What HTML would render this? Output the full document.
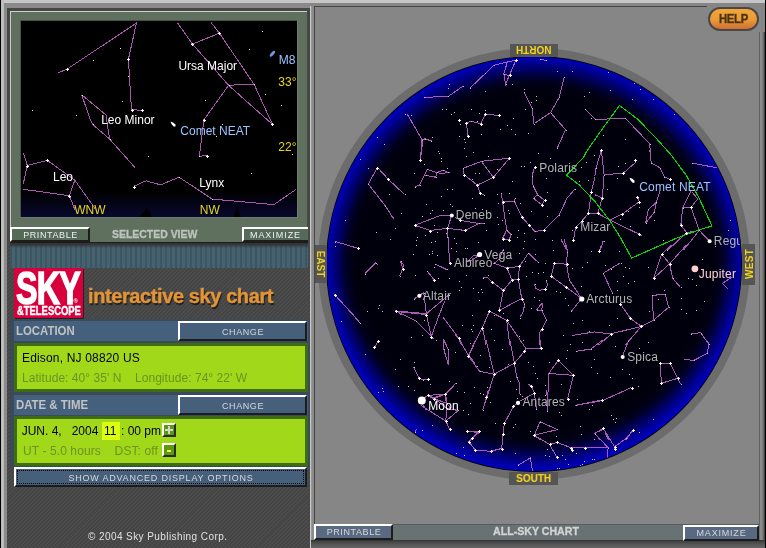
<!DOCTYPE html>
<html><head><meta charset="utf-8">
<style>
*{margin:0;padding:0;box-sizing:border-box}
html,body{width:766px;height:548px;overflow:hidden;background:#858585;font-family:"Liberation Sans",sans-serif}
.abs{position:absolute}
#root{position:absolute;left:0;top:0;width:766px;height:548px;overflow:hidden;background:#868686}
.t{position:absolute;white-space:nowrap;line-height:1;opacity:0.999}
.btn,.bar span,.dir span{opacity:0.999}
.btn{position:absolute;border-top:2px solid #fff;border-left:2px solid #fff;border-right:2px solid #1c1c1c;border-bottom:2px solid #1c1c1c;color:#d4d8dc;font-size:9px;text-align:center;letter-spacing:0.6px;white-space:nowrap;padding-left:1px}
.bar{position:absolute;left:14px;width:294px;height:20px;background:#44607c}
.bar span{position:absolute;left:2px;top:3px;font-size:12px;font-weight:bold;color:#c2c2c2;line-height:14px;transform:scaleX(0.95);transform-origin:left top}
.gbox{position:absolute;left:14px;width:294px;background:#a2d81a;border:3px solid #3e6c10}
.dir{position:absolute;background:#555;color:#f2d21e;font-weight:bold;font-size:10px;text-align:center}
</style></head><body>
<div id="root">
<!-- outer frame -->
<div class="abs" style="left:0;top:0;width:766px;height:3px;background:#c6c6c6"></div>
<div class="abs" style="left:0;top:0;width:1px;height:548px;background:#000"></div>
<div class="abs" style="left:1px;top:0;width:3px;height:548px;background:#bdbdbd"></div>

<!-- LEFT PANEL -->
<div class="abs" style="left:4px;top:3px;width:306px;height:545px;background:#8a8a8a"></div>
<div class="abs" style="left:7px;top:8px;width:303px;height:540px;background:repeating-linear-gradient(135deg,#4c4c4c 0,#4c4c4c 1.4px,#444 1.4px,#444 2.8px)"></div>
<div class="abs" style="left:310px;top:6px;width:1px;height:542px;background:#c8c8c8"></div>
<div class="abs" style="left:311px;top:6px;width:3px;height:542px;background:linear-gradient(90deg,#a0a0a0,#8a8a8a 40%)"></div>
<div class="abs" style="left:314px;top:6px;width:1px;height:542px;background:#444"></div>

<!-- selected view frame -->
<div class="abs" style="left:7px;top:8px;width:303px;height:236px;background:#474747"></div>
<div class="abs" style="left:10px;top:11px;width:297px;height:231px;background:#5f705f;border-top:1px solid #cfcfcf;border-left:1px solid #cfcfcf"></div>
<div class="abs" style="left:20px;top:20px;width:278px;height:198px;background:#6c7c6c"></div>
<div class="abs" style="left:20px;top:20px;width:277px;height:197px;background:#465448"></div>
<div class="abs" id="sv" style="left:21px;top:21px;width:276px;height:196px;background:#000;overflow:hidden">
<!--SVSVG-->
<svg width="276" height="196" viewBox="21 21 276 196" style="position:absolute;left:0;top:0">
<defs><linearGradient id="hz" x1="0" y1="0" x2="0" y2="1"><stop offset="0" stop-color="#000"/><stop offset="1" stop-color="#08082e"/></linearGradient></defs>
<rect x="21" y="191" width="276" height="26" fill="url(#hz)"/>
<g fill="none" stroke="#a856ae" stroke-width="1" shape-rendering="crispEdges">
<polyline points="58.4,72.6 66.6,69.4 137.0,22.7"/>
<polyline points="136.5,22.7 128.4,59.3 131.5,109.6 141.6,110.3"/>
<polyline points="81.6,94.6 106.0,115.0 108.0,129.0 109.6,139.0 134.8,167.4"/>
<polyline points="81.6,94.6 90.4,120.0 92.6,124.4 109.6,139.0"/>
<polyline points="177.4,22.7 192.5,44.1 228.6,85.3 249.6,104.1 272.4,124.4"/>
<polyline points="211.2,22.7 219.4,33.2 254.1,84.4 272.4,124.4"/>
<polyline points="192.5,44.1 219.4,33.2"/>
<polyline points="228.6,85.3 241.0,84.6 254.1,84.4"/>
<polyline points="228.6,85.3 203.9,119.8 199.3,156.4 206.6,155.5"/>
<polyline points="23.3,152.7 27.3,165.5 23.3,183.8"/>
<polyline points="27.3,165.5 47.4,160.4 74.8,180.2 69.4,195.7 23.3,189.3"/>
<polyline points="74.8,180.2 95.0,208.5"/>
<polyline points="69.4,195.7 74.8,209.4"/>
<polyline points="133.8,186.3 146.1,180.8 160.7,184.9 179.0,177.2 212.3,199.1 274.0,204.6 295.9,189.5"/>
</g>
<g fill="#fff" shape-rendering="crispEdges">
<rect x="66" y="69" width="3" height="1"/><rect x="67" y="68" width="1" height="3"/>
<rect x="127" y="59" width="3" height="1"/><rect x="128" y="58" width="1" height="3"/>
<rect x="131" y="110" width="3" height="1"/><rect x="132" y="109" width="1" height="3"/>
<rect x="141" y="110" width="3" height="1"/><rect x="142" y="109" width="1" height="3"/>
<rect x="191" y="44" width="3" height="1"/><rect x="192" y="43" width="1" height="3"/>
<rect x="218" y="33" width="3" height="1"/><rect x="219" y="32" width="1" height="3"/>
<rect x="26" y="166" width="3" height="1"/><rect x="27" y="165" width="1" height="3"/>
<rect x="46" y="160" width="3" height="1"/><rect x="47" y="159" width="1" height="3"/>
<rect x="68" y="196" width="3" height="1"/><rect x="69" y="195" width="1" height="3"/>
<rect x="133" y="187" width="3" height="1"/><rect x="134" y="186" width="1" height="3"/>
<rect x="206" y="156" width="3" height="1"/><rect x="207" y="155" width="1" height="3"/>
<rect x="271" y="124" width="3" height="1"/><rect x="272" y="123" width="1" height="3"/>
<rect x="203" y="120" width="3" height="1"/><rect x="204" y="119" width="1" height="3"/>
<rect x="120" y="48" width="1" height="1" fill="#e8e8e8"/>
<rect x="93" y="60" width="1" height="1" fill="#e8e8e8"/>
<rect x="128" y="76" width="1" height="1" fill="#e8e8e8"/>
<rect x="122" y="101" width="1" height="1" fill="#e8e8e8"/>
<rect x="32" y="110" width="1" height="1" fill="#e8e8e8"/>
<rect x="76" y="115" width="1" height="1" fill="#e8e8e8"/>
<rect x="82" y="95" width="1" height="1" fill="#e8e8e8"/>
<rect x="229" y="85" width="1" height="1" fill="#e8e8e8"/>
<rect x="254" y="84" width="1" height="1" fill="#e8e8e8"/>
<rect x="262" y="31" width="1" height="1" fill="#e8e8e8"/>
<rect x="249" y="49" width="1" height="1" fill="#e8e8e8"/>
<rect x="205" y="100" width="1" height="1" fill="#e8e8e8"/>
<rect x="265" y="94" width="1" height="1" fill="#e8e8e8"/>
<rect x="281" y="105" width="1" height="1" fill="#e8e8e8"/>
<rect x="110" y="139" width="1" height="1" fill="#e8e8e8"/>
<rect x="148" y="156" width="1" height="1" fill="#e8e8e8"/>
<rect x="93" y="124" width="1" height="1" fill="#e8e8e8"/>
<rect x="199" y="156" width="1" height="1" fill="#e8e8e8"/>
<rect x="179" y="177" width="1" height="1" fill="#e8e8e8"/>
<rect x="212" y="199" width="1" height="1" fill="#e8e8e8"/>
<rect x="251" y="173" width="1" height="1" fill="#e8e8e8"/>
<rect x="292" y="154" width="1" height="1" fill="#e8e8e8"/>
<rect x="216" y="136" width="1" height="1" fill="#e8e8e8"/>
<rect x="222" y="124" width="1" height="1" fill="#e8e8e8"/>
</g>
<path d="M140,217 L142,213 L144,212 L145,209 L147,208 L148,210 L150,212 L152,217Z" fill="#000"/>
<path d="M233,217 L236,210 L237,206 L238,210 L241,217Z" fill="#000"/>
<ellipse cx="272.4" cy="53.8" rx="3.6" ry="1.5" fill="#6a98e0" transform="rotate(-50 272.4 53.8)"/>
<path d="M170.5,121.5 L173,122.5 L175.5,124.5 L175.5,126.5 L173.5,126.5 L171.5,124Z" fill="#fff"/>
<g font-family="Liberation Sans, sans-serif" font-size="12" style="opacity:0.999">
<text x="178.4" y="69.8" fill="#fff">Ursa Major</text>
<text x="101.2" y="124.4" fill="#fff">Leo Minor</text>
<text x="180.3" y="134.8" fill="#9cc4ff">Comet NEAT</text>
<text x="199.3" y="186.6" fill="#fff">Lynx</text>
<text x="53.0" y="180.5" fill="#fff">Leo</text>
<text x="74.3" y="214" fill="#e6d61e">WNW</text>
<text x="199.8" y="214" fill="#e6d61e">NW</text>
<text x="278.3" y="86.2" fill="#e6d61e">33°</text>
<text x="278.3" y="150.9" fill="#e6d61e">22°</text>
<text x="278.7" y="63.5" fill="#9cc4ff">M8</text>
</g></svg>
<!--/SVSVG-->
</div>
<div class="btn" style="left:10px;top:227px;width:80px;height:15px;background:#566a58;line-height:12px;color:#f0f0f0">PRINTABLE</div>
<div class="btn" style="left:242px;top:227px;width:66px;height:15px;background:#566a58;line-height:12px;border-right:0;letter-spacing:0.95px;padding-left:0;text-indent:-1px;color:#f0f0f0">MAXIMIZE</div>
<div class="t" style="left:112px;top:229px;font-size:11px;font-weight:bold;color:#bcc4bc;-webkit-text-stroke:0.3px #bcc4bc;transform:scaleX(0.95);transform-origin:left top">SELECTED VIEW</div>

<!-- blue band -->
<div class="abs" style="left:10px;top:242px;width:298px;height:26px;background:linear-gradient(#111 0,#333 1.5px,rgba(50,50,50,0.8) 3px,rgba(60,70,75,0) 6px),repeating-linear-gradient(90deg,#3b5563 0,#3b5563 2.5px,#47626f 2.5px,#47626f 5px)"></div>

<!-- logo -->
<div class="abs" style="left:14px;top:268px;width:69px;height:50px;background:#d8003c;box-shadow:1px 1px 0 #222"></div>
<div class="t" style="left:15.5px;top:265px;font-size:46px;font-weight:bold;color:#fff;-webkit-text-stroke:1.6px #fff;letter-spacing:-1px;transform:scaleX(0.70);transform-origin:left top">SKY</div>
<div class="t" style="left:16.5px;top:305px;font-size:12px;font-weight:bold;color:#fff;-webkit-text-stroke:0.4px #fff;transform:scaleX(0.785);transform-origin:left top">&amp;TELESCOPE</div>
<div class="t" style="left:73.5px;top:298px;font-size:6px;color:#fff;font-weight:bold">®</div>
<div class="t" style="left:88px;top:285.5px;font-size:20px;font-weight:bold;color:#e29436;-webkit-text-stroke:0.4px #e29436;text-shadow:1px 2px 1px #1c1c1c;letter-spacing:-0.4px">interactive sky chart</div>

<!-- location -->
<div class="abs" style="left:10px;top:319px;width:300px;height:148px;background:#3b4a5b"></div>
<div class="bar" style="top:321px"><span>LOCATION</span></div>
<div class="btn" style="left:178px;top:321px;width:129px;height:20px;background:#46607c;line-height:18px">CHANGE</div>
<div class="gbox" style="top:343px;height:49px"></div>
<div class="t" style="left:22px;top:352px;font-size:12px;color:#000;letter-spacing:0.17px">Edison, NJ 08820 US</div>
<div class="t" style="left:22px;top:371.6px;font-size:12px;color:#6a9422;letter-spacing:0.05px">Latitude: 40° 35' N &nbsp;&nbsp; Longitude: 74° 22' W</div>

<!-- date & time -->
<div class="bar" style="top:394.5px"><span>DATE &amp; TIME</span></div>
<div class="btn" style="left:178px;top:395px;width:129px;height:20px;background:#46607c;line-height:18px">CHANGE</div>
<div class="gbox" style="top:416px;height:50px"></div>
<div class="abs" style="left:102px;top:422px;width:18px;height:18px;background:#dcff10"></div>
<div class="t" style="left:21.7px;top:425px;font-size:12px;color:#000">JUN. 4, &nbsp; 2004</div>
<div class="t" style="left:104px;top:425px;font-size:12px;color:#000">11</div>
<div class="t" style="left:121px;top:425px;font-size:12px;color:#000">: 00 pm</div>
<div class="t" style="left:23px;top:445px;font-size:12px;color:#6a9422;letter-spacing:0.1px">UT - 5.0 hours &nbsp;&nbsp; DST: off</div>
<div class="abs" style="left:162px;top:423px;width:14px;height:14px;background:#5c9a0a;border-top:2px solid #fff;border-left:2px solid #fff;border-right:2px solid #2a2a2a;border-bottom:2px solid #2a2a2a"></div>
<div class="abs" style="left:165px;top:429px;width:8px;height:2px;background:#d4d4d4"></div>
<div class="abs" style="left:168px;top:426px;width:2px;height:8px;background:#d4d4d4"></div>
<div class="abs" style="left:162px;top:443px;width:14px;height:14px;background:#5c9a0a;border-top:2px solid #fff;border-left:2px solid #fff;border-right:2px solid #2a2a2a;border-bottom:2px solid #2a2a2a"></div>
<div class="abs" style="left:167px;top:450px;width:4px;height:2px;background:#e6f060"></div>
<div class="btn" style="left:14px;top:467px;width:293px;height:20px;background:#46607c;line-height:18px;letter-spacing:0.8px;outline:1px dotted #000;outline-offset:-4px">SHOW ADVANCED DISPLAY OPTIONS</div>
<div class="t" style="left:88px;top:532px;font-size:10px;color:#e0e0e0;letter-spacing:0.42px">© 2004 Sky Publishing Corp.</div>

<!-- RIGHT PANEL -->
<div class="abs" style="left:315px;top:6px;width:392px;height:1px;background:#444"></div>
<div class="abs" id="rp" style="left:315px;top:7px;width:451px;height:541px;background:#868686"></div>
<!-- ring + sky -->
<div class="abs" style="left:315px;top:7px;width:445px;height:517px;overflow:hidden">
  <div class="abs" style="left:3px;top:41px;width:432px;height:432px;border-radius:50%;background:#6c6c6c"></div>
</div>
<div class="abs" style="left:326px;top:56px;width:416px;height:416px;border-radius:50%;background:#000"></div>
<div class="abs" id="sky" style="left:327px;top:57px;width:414px;height:414px;border-radius:50%;overflow:hidden;background:#0000b2">
<!--SKYSVG-->
<svg width="414" height="414" viewBox="327 57 414 414" style="position:absolute;left:0;top:0">
<defs><filter id="hb" x="-20%" y="-20%" width="140%" height="140%"><feGaussianBlur stdDeviation="8.6 10"/></filter></defs>
<rect x="320" y="50" width="430" height="430" fill="#0000ca"/>
<polygon points="732.5,264.5 731.5,281.7 728.9,298.8 724.6,315.4 718.8,331.6 711.6,347.1 703.2,361.9 693.5,375.8 682.7,388.9 671.0,401.0 658.4,412.2 645.0,422.3 630.8,431.3 615.9,439.1 600.4,445.6 584.4,450.8 568.0,454.6 551.3,456.9 534.5,457.7 517.7,456.9 501.0,454.6 484.6,450.8 468.6,445.6 453.1,439.1 438.2,431.3 424.0,422.3 410.6,412.2 398.0,401.0 386.3,388.9 375.5,375.8 365.8,361.9 357.4,347.1 350.2,331.6 344.4,315.4 340.1,298.8 337.5,281.7 336.5,264.5 337.2,247.2 339.6,230.1 343.6,213.3 349.1,197.0 356.1,181.3 364.5,166.3 374.0,152.1 384.7,138.8 396.4,126.4 409.0,115.0 422.5,104.6 436.8,95.3 451.9,87.3 467.5,80.5 483.8,75.2 500.4,71.3 517.4,68.9 534.5,68.1 551.6,68.9 568.6,71.3 585.2,75.2 601.5,80.5 617.1,87.3 632.2,95.3 646.5,104.6 660.0,115.0 672.6,126.4 684.3,138.8 695.0,152.1 704.5,166.3 712.9,181.3 719.9,197.0 725.4,213.3 729.4,230.1 731.8,247.2" fill="#03030f" filter="url(#hb)"/>
<g fill="none" stroke="#ac58b4" stroke-width="1" shape-rendering="crispEdges">
<polyline points="424.3,97.4 448.4,96.3 462.6,86.4"/>
<polyline points="469.6,88.5 485.5,73.3 493.7,65.4 507.4,61.8 515.7,60.5"/>
<polyline points="507.4,61.8 503.8,74.2 505.6,84.3 515.7,60.5"/>
<polyline points="503.8,74.2 509.6,75.5"/>
<polyline points="468.1,136.4 466.3,122.6 471.4,121.4 480.6,123.6 485.5,114.4 498.7,115.3"/>
<polyline points="406.9,113.5 422.4,140.4 421.5,155.0"/>
<polyline points="422.4,140.4 425.2,139.1 431.6,141.3"/>
<polyline points="524.4,92.5 532.1,108.0 533.9,123.6"/>
<polyline points="540.5,59.0 546.3,60.5"/>
<polyline points="564.3,76.6 559.3,97.4 550.5,112.6 535.0,123.0"/>
<polyline points="550.5,112.6 565.5,129.6 557.3,148.2"/>
<polyline points="585.3,109.3 595.3,119.4 625.5,118.4 637.4,130.9 649.6,143.7 650.7,155.0"/>
<polyline points="601.2,150.1 601.2,155.0"/>
<polyline points="421.9,139.7 420.4,160.2"/>
<polyline points="421.9,139.7 425.2,138.8 431.4,141.0"/>
<polyline points="377.5,167.5 368.3,184.0 385.3,205.9 393.6,218.7"/>
<polyline points="377.5,167.5 388.4,179.4 404.5,194.4"/>
<polyline points="414.6,186.7 419.5,185.4 427.4,169.4 436.9,172.5 435.6,177.2 425.5,175.4"/>
<polyline points="436.9,172.5 442.9,170.3 448.4,172.5 442.0,173.6 436.9,172.5"/>
<polyline points="509.3,158.2 481.5,161.3 463.2,168.3 464.1,174.7 477.3,185.1 493.4,177.4 509.3,158.2"/>
<polyline points="481.5,161.3 493.4,177.4"/>
<polyline points="477.3,185.1 480.0,193.3 484.3,194.8"/>
<polyline points="534.5,167.4 532.1,175.6 533.1,185.6 537.6,194.8 544.6,200.3 541.8,204.8 533.6,198.4 537.6,194.8"/>
<polyline points="574.7,189.3 566.9,198.4 559.2,214.9 543.7,230.4 534.9,231.4 529.0,225.0 521.7,216.7 514.4,201.2 502.5,201.6"/>
<polyline points="514.4,201.2 515.3,198.4"/>
<polyline points="502.5,201.6 501.3,193.3"/>
<polyline points="502.5,201.6 506.7,229.9 502.5,238.7 509.5,239.6 510.8,234.5 506.7,229.9"/>
<polyline points="455.0,217.6 460.5,220.4 478.8,223.5 465.1,230.4 455.0,229.2"/>
<polyline points="478.8,223.5 483.9,223.5"/>
<polyline points="595.0,177.4 591.2,192.4 588.5,213.4 581.5,221.3 575.7,227.1 573.5,240.5"/>
<polyline points="588.5,213.4 595.0,214.0"/>
<polyline points="561.0,239.6 566.5,249.6"/>
<polyline points="564.3,239.2 566.5,249.6"/>
<polyline points="601.4,150.0 595.9,168.3 595.0,175.6"/>
<polyline points="601.4,150.0 604.1,174.7 602.3,197.9 597.7,213.4 595.0,214.0"/>
<polyline points="604.1,174.7 623.3,173.2 636.1,161.9"/>
<polyline points="595.0,194.8 602.3,197.9"/>
<polyline points="609.6,220.0 622.4,214.0 639.4,201.6 637.4,197.2"/>
<polyline points="597.7,213.4 609.6,220.0 639.8,234.5 642.5,236.3"/>
<polyline points="649.8,150.0 651.3,163.2 659.9,167.7 664.1,176.5 669.6,179.3"/>
<polyline points="659.9,191.1 656.2,202.5 648.4,209.4 645.6,223.1 654.4,212.2 656.2,202.5"/>
<polyline points="691.0,191.1 682.8,207.2 680.9,224.6 686.4,232.6 699.2,230.4 691.0,207.2 682.8,207.6"/>
<polyline points="691.0,207.2 697.7,199.0 691.9,191.7"/>
<polyline points="699.2,230.4 709.3,240.9"/>
<polyline points="699.2,230.4 683.7,250.0"/>
<polyline points="686.4,232.6 668.1,250.0"/>
<polyline points="692.4,163.2 716.6,167.7"/>
<polyline points="603.2,240.9 600.5,250.0"/>
<polyline points="390.8,215.0 393.6,218.3"/>
<polyline points="414.6,225.4 439.3,215.9 451.5,215.9"/>
<polyline points="414.6,225.4 430.5,230.5 447.5,228.3 465.0,230.5"/>
<polyline points="451.5,215.9 447.5,228.3 448.4,243.3 449.7,263.4"/>
<polyline points="335.4,241.5 358.5,248.5"/>
<polyline points="365.2,273.5 375.6,262.9 377.7,264.7"/>
<polyline points="400.5,261.3 403.6,264.7 402.7,268.6 399.6,276.2"/>
<polyline points="400.5,261.3 402.7,268.6"/>
<polyline points="435.2,264.0 446.6,269.5"/>
<polyline points="427.4,271.3 434.1,279.9"/>
<polyline points="413.7,299.5 419.1,295.4 423.7,292.7 426.5,315.0"/>
<polyline points="449.3,294.5 426.5,313.7 396.3,311.0 401.8,315.0"/>
<polyline points="444.7,300.9 439.3,315.0"/>
<polyline points="334.5,294.5 353.3,315.0"/>
<polyline points="479.3,254.5 472.9,256.0 467.4,261.5 473.8,259.3 479.3,254.5"/>
<polyline points="503.4,249.0 499.4,258.7 494.3,263.3 507.1,268.2 519.4,266.4 528.5,253.2 537.6,261.8"/>
<polyline points="507.1,268.2 512.0,280.1 518.4,279.2 519.4,266.4"/>
<polyline points="512.0,280.1 503.4,290.3 491.6,281.6 487.5,277.5 483.3,277.5"/>
<polyline points="503.4,290.3 499.4,310.3 521.7,298.6 518.4,279.2"/>
<polyline points="521.7,298.6 524.5,303.5 523.6,310.8 519.9,317.6"/>
<polyline points="545.9,280.1 547.7,284.3 545.5,289.4 539.1,290.2 535.4,288.0 534.5,283.9"/>
<polyline points="566.5,245.0 567.4,252.3 566.5,264.2 554.3,263.3 551.3,276.4 565.6,286.7 581.5,298.6"/>
<polyline points="566.5,264.2 569.3,279.7 581.5,298.6"/>
<polyline points="581.5,298.6 571.5,311.2"/>
<polyline points="542.4,302.6 536.7,309.9 541.8,310.3 542.4,302.6"/>
<polyline points="541.8,310.3 546.4,320.0 542.4,328.7 539.5,332.8 540.0,345.0"/>
<polyline points="489.4,311.2 506.7,320.3 509.8,345.0"/>
<polyline points="489.4,311.2 482.4,327.6 473.3,345.0"/>
<polyline points="506.7,320.3 523.6,345.0"/>
<polyline points="482.4,327.6 486.1,345.0"/>
<polyline points="455.0,334.6 458.7,338.6 461.4,345.0"/>
<polyline points="572.0,335.5 595.0,331.8"/>
<polyline points="601.4,245.0 599.0,251.4"/>
<polyline points="671.8,245.0 661.7,254.1 653.5,278.5 669.6,263.8 686.4,245.0"/>
<polyline points="661.7,254.1 669.6,263.8 672.7,278.5 680.6,287.4"/>
<polyline points="620.6,262.7 603.2,273.3 612.4,292.9"/>
<polyline points="652.2,295.3 665.4,294.4 668.7,307.2 653.5,320.3 652.2,295.3"/>
<polyline points="653.5,320.3 641.3,326.4 630.3,318.5 620.2,303.5"/>
<polyline points="641.3,326.4 611.5,333.7 595.0,332.4"/>
<polyline points="641.3,326.4 628.5,341.3 625.2,345.0"/>
<polyline points="611.5,333.7 598.7,345.0"/>
<polyline points="690.6,333.7 700.7,332.8 709.3,345.0"/>
<polyline points="732.1,277.0 722.4,283.4 727.9,288.9"/>
<polyline points="348.7,310.0 360.2,323.2"/>
<polyline points="396.6,311.5 426.4,314.6 430.1,310.0"/>
<polyline points="396.6,311.5 416.4,321.3 431.3,336.5"/>
<polyline points="426.4,314.6 431.3,336.5 441.0,310.0"/>
<polyline points="431.3,336.5 433.7,339.3"/>
<polyline points="443.2,317.3 458.8,338.3 468.5,355.7 475.0,363.0"/>
<polyline points="468.5,355.7 475.0,341.1"/>
<polyline points="443.4,339.3 448.3,349.3 448.3,364.8 443.8,349.3 443.4,339.3"/>
<polyline points="374.3,347.5 378.3,341.4"/>
<polyline points="413.6,367.2 419.1,378.2 422.8,380.0 427.7,379.1"/>
<polyline points="455.7,383.5 445.6,394.1 427.7,395.4 433.7,398.7 445.6,394.1 446.9,403.2 433.7,398.7"/>
<polyline points="427.7,395.4 421.8,399.6"/>
<polyline points="421.8,403.2 426.4,410.0"/>
<polyline points="446.9,403.2 452.0,410.0"/>
<polyline points="476.0,340.0 468.7,356.1 465.0,349.1"/>
<polyline points="468.7,356.1 479.6,371.4 494.3,374.2 486.0,340.0"/>
<polyline points="494.3,374.2 514.4,363.2 509.8,340.0"/>
<polyline points="514.4,363.2 524.4,351.3 526.2,348.6 519.8,340.0"/>
<polyline points="526.2,348.6 540.5,348.2 540.5,340.0"/>
<polyline points="514.4,363.2 516.7,377.5 519.8,383.9 519.8,394.3"/>
<polyline points="494.3,374.2 486.9,397.2 482.7,410.4"/>
<polyline points="558.2,360.5 548.7,373.5 573.4,375.3 558.2,360.5"/>
<polyline points="548.7,373.5 547.3,411.3"/>
<polyline points="573.4,375.3 567.7,398.5"/>
<polyline points="575.6,351.3 590.8,349.1 603.0,340.0"/>
<polyline points="575.6,405.3 602.5,400.0"/>
<polyline points="528.1,384.4 531.2,385.7 534.5,393.0 536.3,409.1"/>
<polyline points="534.5,393.0 517.7,402.5 513.4,406.7 504.3,423.5 503.0,435.1 502.5,440.0"/>
<polyline points="540.0,421.7 557.3,429.6 534.5,435.1 540.0,421.7"/>
<polyline points="534.5,435.1 540.0,440.0"/>
<polyline points="466.8,431.4 478.7,431.4"/>
<polyline points="478.7,432.3 472.3,437.8"/>
<polyline points="594.8,433.2 603.9,429.0"/>
<polyline points="594.8,433.2 600.3,440.0"/>
<polyline points="628.8,340.0 622.4,356.5"/>
<polyline points="660.4,363.2 670.4,363.4 677.6,378.4 661.3,383.3 660.4,363.2"/>
<polyline points="677.6,378.4 680.5,384.2"/>
<polyline points="706.5,340.0 708.8,343.7 707.4,353.3 693.7,360.5 684.5,359.2"/>
<polyline points="605.0,399.4 631.5,387.5"/>
<polyline points="633.3,429.6 626.0,440.0"/>
<polyline points="605.0,432.3 608.7,440.0"/>
<polyline points="427.5,395.5 433.4,397.7 445.3,394.0 449.8,390.0"/>
<polyline points="445.3,394.0 446.7,408.3 445.8,421.1 449.8,429.3"/>
<polyline points="433.4,397.7 446.7,408.3 458.1,410.5 445.8,421.1 421.1,405.5"/>
<polyline points="488.2,390.0 486.4,397.3 482.8,410.1"/>
<polyline points="513.5,406.5 504.3,423.3 503.2,434.4 501.6,448.5 490.6,451.2 475.4,450.3 468.7,441.6 473.1,437.5 479.1,432.4 467.6,431.5"/>
<polyline points="416.6,429.3 414.6,432.4"/>
<polyline points="518.4,465.0 530.3,458.0 532.7,471.4"/>
<polyline points="569.7,390.0 567.5,398.6"/>
<polyline points="546.9,390.0 547.4,411.6"/>
<polyline points="575.2,405.5 602.3,400.6 626.4,390.0"/>
<polyline points="535.0,435.7 549.6,444.5 557.3,442.5 570.6,447.6 571.6,450.3"/>
<polyline points="549.6,444.5 556.6,456.7"/>
<polyline points="570.6,447.6 585.3,447.6 608.1,447.6 607.6,457.6"/>
<polyline points="608.1,447.6 594.8,433.5 603.2,428.4 614.5,446.7 614.5,449.4"/>
<polyline points="614.5,446.7 626.4,438.4 633.7,429.3"/>
</g>
<polygon points="619.5,105.5 637.4,119.0 655.0,137.0 671.2,155.0 686.4,175.6 699.2,198.4 712.0,226.0 699.2,229.8 675.4,238.7 649.8,250.0 631.6,258.2 620.6,237.8 609.6,220.4 595.0,201.5 579.3,185.0 566.3,175.0 583.0,158.2 587.5,150.0 603.0,128.0" fill="none" stroke="#00dc00" stroke-width="1.1" shape-rendering="crispEdges"/>
<g fill="#fff" shape-rendering="crispEdges">
<rect x="334" y="295" width="3" height="1"/><rect x="335" y="294" width="1" height="3"/>
<rect x="357" y="248" width="3" height="1"/><rect x="358" y="247" width="1" height="3"/>
<rect x="373" y="347" width="3" height="1"/><rect x="374" y="346" width="1" height="3"/>
<rect x="376" y="168" width="3" height="1"/><rect x="377" y="167" width="1" height="3"/>
<rect x="377" y="341" width="3" height="1"/><rect x="378" y="340" width="1" height="3"/>
<rect x="387" y="179" width="3" height="1"/><rect x="388" y="178" width="1" height="3"/>
<rect x="395" y="311" width="3" height="1"/><rect x="396" y="310" width="1" height="3"/>
<rect x="402" y="269" width="3" height="1"/><rect x="403" y="268" width="1" height="3"/>
<rect x="414" y="225" width="3" height="1"/><rect x="415" y="224" width="1" height="3"/>
<rect x="418" y="378" width="3" height="1"/><rect x="419" y="377" width="1" height="3"/>
<rect x="419" y="160" width="3" height="1"/><rect x="420" y="159" width="1" height="3"/>
<rect x="425" y="315" width="3" height="1"/><rect x="426" y="314" width="1" height="3"/>
<rect x="427" y="379" width="3" height="1"/><rect x="428" y="378" width="1" height="3"/>
<rect x="427" y="395" width="3" height="1"/><rect x="428" y="394" width="1" height="3"/>
<rect x="429" y="231" width="3" height="1"/><rect x="430" y="230" width="1" height="3"/>
<rect x="430" y="337" width="3" height="1"/><rect x="431" y="336" width="1" height="3"/>
<rect x="433" y="280" width="3" height="1"/><rect x="434" y="279" width="1" height="3"/>
<rect x="433" y="399" width="3" height="1"/><rect x="434" y="398" width="1" height="3"/>
<rect x="444" y="394" width="3" height="1"/><rect x="445" y="393" width="1" height="3"/>
<rect x="445" y="421" width="3" height="1"/><rect x="446" y="420" width="1" height="3"/>
<rect x="446" y="228" width="3" height="1"/><rect x="447" y="227" width="1" height="3"/>
<rect x="449" y="263" width="3" height="1"/><rect x="450" y="262" width="1" height="3"/>
<rect x="449" y="429" width="3" height="1"/><rect x="450" y="428" width="1" height="3"/>
<rect x="458" y="120" width="3" height="1"/><rect x="459" y="119" width="1" height="3"/>
<rect x="458" y="338" width="3" height="1"/><rect x="459" y="337" width="1" height="3"/>
<rect x="459" y="220" width="3" height="1"/><rect x="460" y="219" width="1" height="3"/>
<rect x="463" y="175" width="3" height="1"/><rect x="464" y="174" width="1" height="3"/>
<rect x="464" y="230" width="3" height="1"/><rect x="465" y="229" width="1" height="3"/>
<rect x="465" y="123" width="3" height="1"/><rect x="466" y="122" width="1" height="3"/>
<rect x="466" y="431" width="3" height="1"/><rect x="467" y="430" width="1" height="3"/>
<rect x="467" y="136" width="3" height="1"/><rect x="468" y="135" width="1" height="3"/>
<rect x="467" y="356" width="3" height="1"/><rect x="468" y="355" width="1" height="3"/>
<rect x="468" y="442" width="3" height="1"/><rect x="469" y="441" width="1" height="3"/>
<rect x="471" y="438" width="3" height="1"/><rect x="472" y="437" width="1" height="3"/>
<rect x="474" y="450" width="3" height="1"/><rect x="475" y="449" width="1" height="3"/>
<rect x="476" y="185" width="3" height="1"/><rect x="477" y="184" width="1" height="3"/>
<rect x="478" y="431" width="3" height="1"/><rect x="479" y="430" width="1" height="3"/>
<rect x="479" y="193" width="3" height="1"/><rect x="480" y="192" width="1" height="3"/>
<rect x="480" y="124" width="3" height="1"/><rect x="481" y="123" width="1" height="3"/>
<rect x="481" y="328" width="3" height="1"/><rect x="482" y="327" width="1" height="3"/>
<rect x="484" y="114" width="3" height="1"/><rect x="485" y="113" width="1" height="3"/>
<rect x="485" y="397" width="3" height="1"/><rect x="486" y="396" width="1" height="3"/>
<rect x="488" y="311" width="3" height="1"/><rect x="489" y="310" width="1" height="3"/>
<rect x="490" y="451" width="3" height="1"/><rect x="491" y="450" width="1" height="3"/>
<rect x="491" y="282" width="3" height="1"/><rect x="492" y="281" width="1" height="3"/>
<rect x="492" y="177" width="3" height="1"/><rect x="493" y="176" width="1" height="3"/>
<rect x="493" y="374" width="3" height="1"/><rect x="494" y="373" width="1" height="3"/>
<rect x="498" y="115" width="3" height="1"/><rect x="499" y="114" width="1" height="3"/>
<rect x="498" y="310" width="3" height="1"/><rect x="499" y="309" width="1" height="3"/>
<rect x="501" y="449" width="3" height="1"/><rect x="502" y="448" width="1" height="3"/>
<rect x="502" y="202" width="3" height="1"/><rect x="503" y="201" width="1" height="3"/>
<rect x="502" y="239" width="3" height="1"/><rect x="503" y="238" width="1" height="3"/>
<rect x="502" y="290" width="3" height="1"/><rect x="503" y="289" width="1" height="3"/>
<rect x="502" y="434" width="3" height="1"/><rect x="503" y="433" width="1" height="3"/>
<rect x="503" y="423" width="3" height="1"/><rect x="504" y="422" width="1" height="3"/>
<rect x="506" y="268" width="3" height="1"/><rect x="507" y="267" width="1" height="3"/>
<rect x="506" y="320" width="3" height="1"/><rect x="507" y="319" width="1" height="3"/>
<rect x="508" y="158" width="3" height="1"/><rect x="509" y="157" width="1" height="3"/>
<rect x="508" y="240" width="3" height="1"/><rect x="509" y="239" width="1" height="3"/>
<rect x="509" y="75" width="3" height="1"/><rect x="510" y="74" width="1" height="3"/>
<rect x="511" y="280" width="3" height="1"/><rect x="512" y="279" width="1" height="3"/>
<rect x="512" y="406" width="3" height="1"/><rect x="513" y="405" width="1" height="3"/>
<rect x="513" y="363" width="3" height="1"/><rect x="514" y="362" width="1" height="3"/>
<rect x="515" y="60" width="3" height="1"/><rect x="516" y="59" width="1" height="3"/>
<rect x="517" y="279" width="3" height="1"/><rect x="518" y="278" width="1" height="3"/>
<rect x="518" y="266" width="3" height="1"/><rect x="519" y="265" width="1" height="3"/>
<rect x="521" y="217" width="3" height="1"/><rect x="522" y="216" width="1" height="3"/>
<rect x="521" y="299" width="3" height="1"/><rect x="522" y="298" width="1" height="3"/>
<rect x="523" y="351" width="3" height="1"/><rect x="524" y="350" width="1" height="3"/>
<rect x="528" y="225" width="3" height="1"/><rect x="529" y="224" width="1" height="3"/>
<rect x="530" y="386" width="3" height="1"/><rect x="531" y="385" width="1" height="3"/>
<rect x="533" y="393" width="3" height="1"/><rect x="534" y="392" width="1" height="3"/>
<rect x="533" y="435" width="3" height="1"/><rect x="534" y="434" width="1" height="3"/>
<rect x="534" y="167" width="3" height="1"/><rect x="535" y="166" width="1" height="3"/>
<rect x="540" y="348" width="3" height="1"/><rect x="541" y="347" width="1" height="3"/>
<rect x="541" y="205" width="3" height="1"/><rect x="542" y="204" width="1" height="3"/>
<rect x="541" y="329" width="3" height="1"/><rect x="542" y="328" width="1" height="3"/>
<rect x="543" y="230" width="3" height="1"/><rect x="544" y="229" width="1" height="3"/>
<rect x="544" y="200" width="3" height="1"/><rect x="545" y="199" width="1" height="3"/>
<rect x="544" y="289" width="3" height="1"/><rect x="545" y="288" width="1" height="3"/>
<rect x="549" y="444" width="3" height="1"/><rect x="550" y="443" width="1" height="3"/>
<rect x="550" y="276" width="3" height="1"/><rect x="551" y="275" width="1" height="3"/>
<rect x="553" y="263" width="3" height="1"/><rect x="554" y="262" width="1" height="3"/>
<rect x="556" y="442" width="3" height="1"/><rect x="557" y="441" width="1" height="3"/>
<rect x="556" y="457" width="3" height="1"/><rect x="557" y="456" width="1" height="3"/>
<rect x="557" y="360" width="3" height="1"/><rect x="558" y="359" width="1" height="3"/>
<rect x="565" y="287" width="3" height="1"/><rect x="566" y="286" width="1" height="3"/>
<rect x="566" y="264" width="3" height="1"/><rect x="567" y="263" width="1" height="3"/>
<rect x="567" y="399" width="3" height="1"/><rect x="568" y="398" width="1" height="3"/>
<rect x="570" y="448" width="3" height="1"/><rect x="571" y="447" width="1" height="3"/>
<rect x="571" y="450" width="3" height="1"/><rect x="572" y="449" width="1" height="3"/>
<rect x="572" y="240" width="3" height="1"/><rect x="573" y="239" width="1" height="3"/>
<rect x="572" y="375" width="3" height="1"/><rect x="573" y="374" width="1" height="3"/>
<rect x="575" y="227" width="3" height="1"/><rect x="576" y="226" width="1" height="3"/>
<rect x="581" y="221" width="3" height="1"/><rect x="582" y="220" width="1" height="3"/>
<rect x="584" y="448" width="3" height="1"/><rect x="585" y="447" width="1" height="3"/>
<rect x="587" y="213" width="3" height="1"/><rect x="588" y="212" width="1" height="3"/>
<rect x="590" y="192" width="3" height="1"/><rect x="591" y="191" width="1" height="3"/>
<rect x="597" y="213" width="3" height="1"/><rect x="598" y="212" width="1" height="3"/>
<rect x="598" y="251" width="3" height="1"/><rect x="599" y="250" width="1" height="3"/>
<rect x="600" y="150" width="3" height="1"/><rect x="601" y="149" width="1" height="3"/>
<rect x="601" y="198" width="3" height="1"/><rect x="602" y="197" width="1" height="3"/>
<rect x="601" y="400" width="3" height="1"/><rect x="602" y="399" width="1" height="3"/>
<rect x="602" y="428" width="3" height="1"/><rect x="603" y="427" width="1" height="3"/>
<rect x="610" y="334" width="3" height="1"/><rect x="611" y="333" width="1" height="3"/>
<rect x="614" y="447" width="3" height="1"/><rect x="615" y="446" width="1" height="3"/>
<rect x="614" y="449" width="3" height="1"/><rect x="615" y="448" width="1" height="3"/>
<rect x="619" y="304" width="3" height="1"/><rect x="620" y="303" width="1" height="3"/>
<rect x="621" y="214" width="3" height="1"/><rect x="622" y="213" width="1" height="3"/>
<rect x="622" y="173" width="3" height="1"/><rect x="623" y="172" width="1" height="3"/>
<rect x="629" y="318" width="3" height="1"/><rect x="630" y="317" width="1" height="3"/>
<rect x="631" y="388" width="3" height="1"/><rect x="632" y="387" width="1" height="3"/>
<rect x="632" y="430" width="3" height="1"/><rect x="633" y="429" width="1" height="3"/>
<rect x="634" y="160" width="3" height="1"/><rect x="635" y="159" width="1" height="3"/>
<rect x="636" y="197" width="3" height="1"/><rect x="637" y="196" width="1" height="3"/>
<rect x="638" y="202" width="3" height="1"/><rect x="639" y="201" width="1" height="3"/>
<rect x="638" y="234" width="3" height="1"/><rect x="639" y="233" width="1" height="3"/>
<rect x="640" y="326" width="3" height="1"/><rect x="641" y="325" width="1" height="3"/>
<rect x="653" y="278" width="3" height="1"/><rect x="654" y="277" width="1" height="3"/>
<rect x="659" y="363" width="3" height="1"/><rect x="660" y="362" width="1" height="3"/>
<rect x="660" y="383" width="3" height="1"/><rect x="661" y="382" width="1" height="3"/>
<rect x="661" y="254" width="3" height="1"/><rect x="662" y="253" width="1" height="3"/>
<rect x="669" y="179" width="3" height="1"/><rect x="670" y="178" width="1" height="3"/>
<rect x="669" y="264" width="3" height="1"/><rect x="670" y="263" width="1" height="3"/>
<rect x="669" y="363" width="3" height="1"/><rect x="670" y="362" width="1" height="3"/>
<rect x="677" y="378" width="3" height="1"/><rect x="678" y="377" width="1" height="3"/>
<rect x="680" y="225" width="3" height="1"/><rect x="681" y="224" width="1" height="3"/>
<rect x="685" y="233" width="3" height="1"/><rect x="686" y="232" width="1" height="3"/>
<rect x="690" y="207" width="3" height="1"/><rect x="691" y="206" width="1" height="3"/>
</g><g fill="#c8c8c8" shape-rendering="crispEdges">
<rect x="335" y="242" width="1" height="1"/>
<rect x="335" y="246" width="1" height="1"/>
<rect x="341" y="321" width="1" height="1"/>
<rect x="345" y="220" width="1" height="1"/>
<rect x="360" y="159" width="1" height="1"/>
<rect x="360" y="323" width="1" height="1"/>
<rect x="365" y="274" width="1" height="1"/>
<rect x="365" y="354" width="1" height="1"/>
<rect x="367" y="311" width="1" height="1"/>
<rect x="368" y="168" width="1" height="1"/>
<rect x="368" y="184" width="1" height="1"/>
<rect x="376" y="232" width="1" height="1"/>
<rect x="376" y="263" width="1" height="1"/>
<rect x="377" y="137" width="1" height="1"/>
<rect x="378" y="308" width="1" height="1"/>
<rect x="378" y="392" width="1" height="1"/>
<rect x="379" y="305" width="1" height="1"/>
<rect x="382" y="311" width="1" height="1"/>
<rect x="382" y="388" width="1" height="1"/>
<rect x="383" y="391" width="1" height="1"/>
<rect x="384" y="144" width="1" height="1"/>
<rect x="385" y="206" width="1" height="1"/>
<rect x="389" y="194" width="1" height="1"/>
<rect x="390" y="239" width="1" height="1"/>
<rect x="395" y="228" width="1" height="1"/>
<rect x="395" y="369" width="1" height="1"/>
<rect x="398" y="386" width="1" height="1"/>
<rect x="400" y="276" width="1" height="1"/>
<rect x="400" y="359" width="1" height="1"/>
<rect x="401" y="213" width="1" height="1"/>
<rect x="401" y="261" width="1" height="1"/>
<rect x="405" y="114" width="1" height="1"/>
<rect x="405" y="194" width="1" height="1"/>
<rect x="408" y="386" width="1" height="1"/>
<rect x="411" y="115" width="1" height="1"/>
<rect x="411" y="337" width="1" height="1"/>
<rect x="413" y="254" width="1" height="1"/>
<rect x="414" y="173" width="1" height="1"/>
<rect x="414" y="299" width="1" height="1"/>
<rect x="414" y="362" width="1" height="1"/>
<rect x="414" y="367" width="1" height="1"/>
<rect x="414" y="390" width="1" height="1"/>
<rect x="415" y="187" width="1" height="1"/>
<rect x="415" y="275" width="1" height="1"/>
<rect x="415" y="432" width="1" height="1"/>
<rect x="416" y="240" width="1" height="1"/>
<rect x="416" y="245" width="1" height="1"/>
<rect x="416" y="321" width="1" height="1"/>
<rect x="417" y="237" width="1" height="1"/>
<rect x="420" y="185" width="1" height="1"/>
<rect x="422" y="140" width="1" height="1"/>
<rect x="422" y="216" width="1" height="1"/>
<rect x="422" y="335" width="1" height="1"/>
<rect x="422" y="430" width="1" height="1"/>
<rect x="423" y="380" width="1" height="1"/>
<rect x="424" y="97" width="1" height="1"/>
<rect x="424" y="164" width="1" height="1"/>
<rect x="424" y="293" width="1" height="1"/>
<rect x="424" y="320" width="1" height="1"/>
<rect x="425" y="139" width="1" height="1"/>
<rect x="425" y="235" width="1" height="1"/>
<rect x="426" y="175" width="1" height="1"/>
<rect x="426" y="204" width="1" height="1"/>
<rect x="427" y="169" width="1" height="1"/>
<rect x="427" y="271" width="1" height="1"/>
<rect x="429" y="254" width="1" height="1"/>
<rect x="430" y="213" width="1" height="1"/>
<rect x="430" y="384" width="1" height="1"/>
<rect x="431" y="141" width="1" height="1"/>
<rect x="431" y="242" width="1" height="1"/>
<rect x="432" y="137" width="1" height="1"/>
<rect x="432" y="210" width="1" height="1"/>
<rect x="432" y="251" width="1" height="1"/>
<rect x="432" y="253" width="1" height="1"/>
<rect x="432" y="425" width="1" height="1"/>
<rect x="434" y="225" width="1" height="1"/>
<rect x="434" y="267" width="1" height="1"/>
<rect x="435" y="241" width="1" height="1"/>
<rect x="435" y="264" width="1" height="1"/>
<rect x="436" y="177" width="1" height="1"/>
<rect x="436" y="340" width="1" height="1"/>
<rect x="437" y="172" width="1" height="1"/>
<rect x="437" y="232" width="1" height="1"/>
<rect x="437" y="255" width="1" height="1"/>
<rect x="438" y="151" width="1" height="1"/>
<rect x="438" y="278" width="1" height="1"/>
<rect x="439" y="153" width="1" height="1"/>
<rect x="441" y="158" width="1" height="1"/>
<rect x="441" y="161" width="1" height="1"/>
<rect x="441" y="196" width="1" height="1"/>
<rect x="442" y="109" width="1" height="1"/>
<rect x="443" y="170" width="1" height="1"/>
<rect x="443" y="210" width="1" height="1"/>
<rect x="444" y="349" width="1" height="1"/>
<rect x="446" y="109" width="1" height="1"/>
<rect x="446" y="233" width="1" height="1"/>
<rect x="447" y="168" width="1" height="1"/>
<rect x="447" y="189" width="1" height="1"/>
<rect x="447" y="237" width="1" height="1"/>
<rect x="447" y="269" width="1" height="1"/>
<rect x="447" y="403" width="1" height="1"/>
<rect x="447" y="408" width="1" height="1"/>
<rect x="448" y="88" width="1" height="1"/>
<rect x="448" y="96" width="1" height="1"/>
<rect x="448" y="172" width="1" height="1"/>
<rect x="448" y="349" width="1" height="1"/>
<rect x="449" y="84" width="1" height="1"/>
<rect x="449" y="278" width="1" height="1"/>
<rect x="449" y="295" width="1" height="1"/>
<rect x="449" y="381" width="1" height="1"/>
<rect x="450" y="204" width="1" height="1"/>
<rect x="451" y="114" width="1" height="1"/>
<rect x="451" y="248" width="1" height="1"/>
<rect x="452" y="189" width="1" height="1"/>
<rect x="452" y="206" width="1" height="1"/>
<rect x="454" y="112" width="1" height="1"/>
<rect x="454" y="238" width="1" height="1"/>
<rect x="455" y="352" width="1" height="1"/>
<rect x="456" y="243" width="1" height="1"/>
<rect x="456" y="251" width="1" height="1"/>
<rect x="456" y="383" width="1" height="1"/>
<rect x="456" y="453" width="1" height="1"/>
<rect x="457" y="391" width="1" height="1"/>
<rect x="458" y="410" width="1" height="1"/>
<rect x="459" y="136" width="1" height="1"/>
<rect x="459" y="281" width="1" height="1"/>
<rect x="459" y="290" width="1" height="1"/>
<rect x="460" y="124" width="1" height="1"/>
<rect x="461" y="287" width="1" height="1"/>
<rect x="462" y="325" width="1" height="1"/>
<rect x="463" y="86" width="1" height="1"/>
<rect x="463" y="168" width="1" height="1"/>
<rect x="463" y="410" width="1" height="1"/>
<rect x="463" y="447" width="1" height="1"/>
<rect x="464" y="139" width="1" height="1"/>
<rect x="464" y="148" width="1" height="1"/>
<rect x="464" y="392" width="1" height="1"/>
<rect x="464" y="455" width="1" height="1"/>
<rect x="465" y="142" width="1" height="1"/>
<rect x="465" y="248" width="1" height="1"/>
<rect x="466" y="156" width="1" height="1"/>
<rect x="466" y="275" width="1" height="1"/>
<rect x="467" y="248" width="1" height="1"/>
<rect x="468" y="414" width="1" height="1"/>
<rect x="470" y="88" width="1" height="1"/>
<rect x="470" y="343" width="1" height="1"/>
<rect x="470" y="403" width="1" height="1"/>
<rect x="471" y="109" width="1" height="1"/>
<rect x="471" y="121" width="1" height="1"/>
<rect x="471" y="329" width="1" height="1"/>
<rect x="472" y="179" width="1" height="1"/>
<rect x="472" y="198" width="1" height="1"/>
<rect x="472" y="315" width="1" height="1"/>
<rect x="472" y="331" width="1" height="1"/>
<rect x="473" y="152" width="1" height="1"/>
<rect x="473" y="288" width="1" height="1"/>
<rect x="473" y="325" width="1" height="1"/>
<rect x="474" y="387" width="1" height="1"/>
<rect x="475" y="173" width="1" height="1"/>
<rect x="475" y="208" width="1" height="1"/>
<rect x="477" y="121" width="1" height="1"/>
<rect x="477" y="366" width="1" height="1"/>
<rect x="478" y="242" width="1" height="1"/>
<rect x="478" y="292" width="1" height="1"/>
<rect x="479" y="113" width="1" height="1"/>
<rect x="479" y="173" width="1" height="1"/>
<rect x="479" y="223" width="1" height="1"/>
<rect x="479" y="300" width="1" height="1"/>
<rect x="480" y="355" width="1" height="1"/>
<rect x="480" y="371" width="1" height="1"/>
<rect x="480" y="393" width="1" height="1"/>
<rect x="481" y="134" width="1" height="1"/>
<rect x="481" y="289" width="1" height="1"/>
<rect x="482" y="161" width="1" height="1"/>
<rect x="482" y="209" width="1" height="1"/>
<rect x="482" y="292" width="1" height="1"/>
<rect x="483" y="278" width="1" height="1"/>
<rect x="483" y="394" width="1" height="1"/>
<rect x="483" y="410" width="1" height="1"/>
<rect x="484" y="195" width="1" height="1"/>
<rect x="484" y="223" width="1" height="1"/>
<rect x="485" y="73" width="1" height="1"/>
<rect x="485" y="91" width="1" height="1"/>
<rect x="485" y="110" width="1" height="1"/>
<rect x="486" y="230" width="1" height="1"/>
<rect x="487" y="387" width="1" height="1"/>
<rect x="488" y="156" width="1" height="1"/>
<rect x="488" y="275" width="1" height="1"/>
<rect x="489" y="367" width="1" height="1"/>
<rect x="490" y="402" width="1" height="1"/>
<rect x="491" y="329" width="1" height="1"/>
<rect x="494" y="65" width="1" height="1"/>
<rect x="494" y="263" width="1" height="1"/>
<rect x="494" y="315" width="1" height="1"/>
<rect x="494" y="340" width="1" height="1"/>
<rect x="495" y="423" width="1" height="1"/>
<rect x="497" y="169" width="1" height="1"/>
<rect x="497" y="194" width="1" height="1"/>
<rect x="497" y="217" width="1" height="1"/>
<rect x="498" y="203" width="1" height="1"/>
<rect x="498" y="224" width="1" height="1"/>
<rect x="499" y="259" width="1" height="1"/>
<rect x="500" y="129" width="1" height="1"/>
<rect x="501" y="193" width="1" height="1"/>
<rect x="502" y="220" width="1" height="1"/>
<rect x="502" y="349" width="1" height="1"/>
<rect x="503" y="250" width="1" height="1"/>
<rect x="503" y="313" width="1" height="1"/>
<rect x="504" y="74" width="1" height="1"/>
<rect x="506" y="84" width="1" height="1"/>
<rect x="507" y="125" width="1" height="1"/>
<rect x="507" y="230" width="1" height="1"/>
<rect x="508" y="210" width="1" height="1"/>
<rect x="508" y="364" width="1" height="1"/>
<rect x="509" y="193" width="1" height="1"/>
<rect x="509" y="213" width="1" height="1"/>
<rect x="510" y="381" width="1" height="1"/>
<rect x="511" y="129" width="1" height="1"/>
<rect x="511" y="234" width="1" height="1"/>
<rect x="512" y="84" width="1" height="1"/>
<rect x="512" y="181" width="1" height="1"/>
<rect x="513" y="118" width="1" height="1"/>
<rect x="513" y="427" width="1" height="1"/>
<rect x="514" y="201" width="1" height="1"/>
<rect x="515" y="134" width="1" height="1"/>
<rect x="515" y="198" width="1" height="1"/>
<rect x="515" y="424" width="1" height="1"/>
<rect x="515" y="453" width="1" height="1"/>
<rect x="516" y="389" width="1" height="1"/>
<rect x="517" y="237" width="1" height="1"/>
<rect x="517" y="377" width="1" height="1"/>
<rect x="517" y="398" width="1" height="1"/>
<rect x="518" y="230" width="1" height="1"/>
<rect x="518" y="465" width="1" height="1"/>
<rect x="519" y="253" width="1" height="1"/>
<rect x="519" y="336" width="1" height="1"/>
<rect x="520" y="203" width="1" height="1"/>
<rect x="520" y="318" width="1" height="1"/>
<rect x="520" y="394" width="1" height="1"/>
<rect x="521" y="166" width="1" height="1"/>
<rect x="522" y="396" width="1" height="1"/>
<rect x="523" y="248" width="1" height="1"/>
<rect x="523" y="340" width="1" height="1"/>
<rect x="524" y="89" width="1" height="1"/>
<rect x="524" y="92" width="1" height="1"/>
<rect x="524" y="166" width="1" height="1"/>
<rect x="524" y="233" width="1" height="1"/>
<rect x="524" y="241" width="1" height="1"/>
<rect x="524" y="304" width="1" height="1"/>
<rect x="525" y="109" width="1" height="1"/>
<rect x="525" y="261" width="1" height="1"/>
<rect x="526" y="276" width="1" height="1"/>
<rect x="528" y="133" width="1" height="1"/>
<rect x="528" y="253" width="1" height="1"/>
<rect x="528" y="362" width="1" height="1"/>
<rect x="530" y="162" width="1" height="1"/>
<rect x="530" y="431" width="1" height="1"/>
<rect x="530" y="458" width="1" height="1"/>
<rect x="531" y="102" width="1" height="1"/>
<rect x="531" y="211" width="1" height="1"/>
<rect x="531" y="308" width="1" height="1"/>
<rect x="532" y="108" width="1" height="1"/>
<rect x="532" y="176" width="1" height="1"/>
<rect x="532" y="272" width="1" height="1"/>
<rect x="533" y="186" width="1" height="1"/>
<rect x="533" y="366" width="1" height="1"/>
<rect x="534" y="124" width="1" height="1"/>
<rect x="534" y="198" width="1" height="1"/>
<rect x="534" y="297" width="1" height="1"/>
<rect x="535" y="231" width="1" height="1"/>
<rect x="535" y="239" width="1" height="1"/>
<rect x="535" y="254" width="1" height="1"/>
<rect x="535" y="284" width="1" height="1"/>
<rect x="535" y="373" width="1" height="1"/>
<rect x="536" y="96" width="1" height="1"/>
<rect x="536" y="100" width="1" height="1"/>
<rect x="536" y="409" width="1" height="1"/>
<rect x="537" y="310" width="1" height="1"/>
<rect x="537" y="378" width="1" height="1"/>
<rect x="538" y="153" width="1" height="1"/>
<rect x="538" y="195" width="1" height="1"/>
<rect x="538" y="262" width="1" height="1"/>
<rect x="538" y="273" width="1" height="1"/>
<rect x="539" y="300" width="1" height="1"/>
<rect x="540" y="59" width="1" height="1"/>
<rect x="540" y="422" width="1" height="1"/>
<rect x="542" y="310" width="1" height="1"/>
<rect x="543" y="272" width="1" height="1"/>
<rect x="545" y="263" width="1" height="1"/>
<rect x="545" y="385" width="1" height="1"/>
<rect x="545" y="395" width="1" height="1"/>
<rect x="545" y="455" width="1" height="1"/>
<rect x="546" y="60" width="1" height="1"/>
<rect x="546" y="178" width="1" height="1"/>
<rect x="546" y="280" width="1" height="1"/>
<rect x="546" y="320" width="1" height="1"/>
<rect x="547" y="192" width="1" height="1"/>
<rect x="547" y="216" width="1" height="1"/>
<rect x="547" y="411" width="1" height="1"/>
<rect x="547" y="449" width="1" height="1"/>
<rect x="549" y="362" width="1" height="1"/>
<rect x="549" y="373" width="1" height="1"/>
<rect x="549" y="456" width="1" height="1"/>
<rect x="550" y="158" width="1" height="1"/>
<rect x="551" y="113" width="1" height="1"/>
<rect x="552" y="240" width="1" height="1"/>
<rect x="553" y="250" width="1" height="1"/>
<rect x="556" y="291" width="1" height="1"/>
<rect x="556" y="436" width="1" height="1"/>
<rect x="557" y="71" width="1" height="1"/>
<rect x="557" y="148" width="1" height="1"/>
<rect x="557" y="429" width="1" height="1"/>
<rect x="557" y="468" width="1" height="1"/>
<rect x="559" y="97" width="1" height="1"/>
<rect x="559" y="215" width="1" height="1"/>
<rect x="559" y="282" width="1" height="1"/>
<rect x="559" y="412" width="1" height="1"/>
<rect x="559" y="468" width="1" height="1"/>
<rect x="560" y="292" width="1" height="1"/>
<rect x="561" y="384" width="1" height="1"/>
<rect x="561" y="415" width="1" height="1"/>
<rect x="562" y="455" width="1" height="1"/>
<rect x="562" y="470" width="1" height="1"/>
<rect x="563" y="335" width="1" height="1"/>
<rect x="564" y="77" width="1" height="1"/>
<rect x="565" y="298" width="1" height="1"/>
<rect x="565" y="459" width="1" height="1"/>
<rect x="566" y="130" width="1" height="1"/>
<rect x="566" y="358" width="1" height="1"/>
<rect x="567" y="252" width="1" height="1"/>
<rect x="567" y="350" width="1" height="1"/>
<rect x="568" y="305" width="1" height="1"/>
<rect x="568" y="464" width="1" height="1"/>
<rect x="569" y="280" width="1" height="1"/>
<rect x="570" y="344" width="1" height="1"/>
<rect x="571" y="311" width="1" height="1"/>
<rect x="572" y="71" width="1" height="1"/>
<rect x="572" y="230" width="1" height="1"/>
<rect x="572" y="268" width="1" height="1"/>
<rect x="573" y="323" width="1" height="1"/>
<rect x="575" y="189" width="1" height="1"/>
<rect x="576" y="351" width="1" height="1"/>
<rect x="576" y="405" width="1" height="1"/>
<rect x="576" y="453" width="1" height="1"/>
<rect x="577" y="399" width="1" height="1"/>
<rect x="579" y="181" width="1" height="1"/>
<rect x="580" y="426" width="1" height="1"/>
<rect x="580" y="465" width="1" height="1"/>
<rect x="581" y="167" width="1" height="1"/>
<rect x="581" y="286" width="1" height="1"/>
<rect x="581" y="434" width="1" height="1"/>
<rect x="582" y="267" width="1" height="1"/>
<rect x="582" y="320" width="1" height="1"/>
<rect x="582" y="342" width="1" height="1"/>
<rect x="582" y="464" width="1" height="1"/>
<rect x="584" y="96" width="1" height="1"/>
<rect x="584" y="461" width="1" height="1"/>
<rect x="585" y="109" width="1" height="1"/>
<rect x="586" y="162" width="1" height="1"/>
<rect x="587" y="262" width="1" height="1"/>
<rect x="588" y="180" width="1" height="1"/>
<rect x="589" y="92" width="1" height="1"/>
<rect x="589" y="331" width="1" height="1"/>
<rect x="589" y="409" width="1" height="1"/>
<rect x="591" y="118" width="1" height="1"/>
<rect x="591" y="251" width="1" height="1"/>
<rect x="591" y="349" width="1" height="1"/>
<rect x="591" y="367" width="1" height="1"/>
<rect x="592" y="405" width="1" height="1"/>
<rect x="592" y="459" width="1" height="1"/>
<rect x="594" y="155" width="1" height="1"/>
<rect x="594" y="359" width="1" height="1"/>
<rect x="594" y="439" width="1" height="1"/>
<rect x="594" y="459" width="1" height="1"/>
<rect x="595" y="119" width="1" height="1"/>
<rect x="595" y="434" width="1" height="1"/>
<rect x="595" y="462" width="1" height="1"/>
<rect x="596" y="168" width="1" height="1"/>
<rect x="597" y="373" width="1" height="1"/>
<rect x="603" y="135" width="1" height="1"/>
<rect x="603" y="273" width="1" height="1"/>
<rect x="604" y="175" width="1" height="1"/>
<rect x="604" y="241" width="1" height="1"/>
<rect x="605" y="265" width="1" height="1"/>
<rect x="607" y="189" width="1" height="1"/>
<rect x="608" y="72" width="1" height="1"/>
<rect x="608" y="448" width="1" height="1"/>
<rect x="609" y="325" width="1" height="1"/>
<rect x="610" y="90" width="1" height="1"/>
<rect x="610" y="377" width="1" height="1"/>
<rect x="611" y="269" width="1" height="1"/>
<rect x="611" y="415" width="1" height="1"/>
<rect x="612" y="293" width="1" height="1"/>
<rect x="613" y="419" width="1" height="1"/>
<rect x="615" y="346" width="1" height="1"/>
<rect x="615" y="422" width="1" height="1"/>
<rect x="616" y="418" width="1" height="1"/>
<rect x="617" y="178" width="1" height="1"/>
<rect x="617" y="281" width="1" height="1"/>
<rect x="617" y="290" width="1" height="1"/>
<rect x="617" y="318" width="1" height="1"/>
<rect x="618" y="166" width="1" height="1"/>
<rect x="619" y="251" width="1" height="1"/>
<rect x="620" y="219" width="1" height="1"/>
<rect x="621" y="263" width="1" height="1"/>
<rect x="622" y="369" width="1" height="1"/>
<rect x="623" y="276" width="1" height="1"/>
<rect x="625" y="118" width="1" height="1"/>
<rect x="625" y="139" width="1" height="1"/>
<rect x="625" y="163" width="1" height="1"/>
<rect x="625" y="267" width="1" height="1"/>
<rect x="626" y="438" width="1" height="1"/>
<rect x="628" y="211" width="1" height="1"/>
<rect x="628" y="283" width="1" height="1"/>
<rect x="628" y="341" width="1" height="1"/>
<rect x="629" y="268" width="1" height="1"/>
<rect x="629" y="374" width="1" height="1"/>
<rect x="630" y="226" width="1" height="1"/>
<rect x="632" y="99" width="1" height="1"/>
<rect x="632" y="378" width="1" height="1"/>
<rect x="634" y="83" width="1" height="1"/>
<rect x="634" y="281" width="1" height="1"/>
<rect x="638" y="386" width="1" height="1"/>
<rect x="639" y="207" width="1" height="1"/>
<rect x="639" y="348" width="1" height="1"/>
<rect x="639" y="432" width="1" height="1"/>
<rect x="640" y="89" width="1" height="1"/>
<rect x="646" y="223" width="1" height="1"/>
<rect x="648" y="209" width="1" height="1"/>
<rect x="648" y="267" width="1" height="1"/>
<rect x="648" y="342" width="1" height="1"/>
<rect x="649" y="311" width="1" height="1"/>
<rect x="650" y="144" width="1" height="1"/>
<rect x="651" y="163" width="1" height="1"/>
<rect x="652" y="295" width="1" height="1"/>
<rect x="653" y="99" width="1" height="1"/>
<rect x="653" y="419" width="1" height="1"/>
<rect x="654" y="212" width="1" height="1"/>
<rect x="654" y="220" width="1" height="1"/>
<rect x="654" y="320" width="1" height="1"/>
<rect x="656" y="202" width="1" height="1"/>
<rect x="658" y="299" width="1" height="1"/>
<rect x="660" y="168" width="1" height="1"/>
<rect x="663" y="240" width="1" height="1"/>
<rect x="664" y="177" width="1" height="1"/>
<rect x="664" y="290" width="1" height="1"/>
<rect x="665" y="294" width="1" height="1"/>
<rect x="667" y="250" width="1" height="1"/>
<rect x="669" y="307" width="1" height="1"/>
<rect x="673" y="278" width="1" height="1"/>
<rect x="674" y="114" width="1" height="1"/>
<rect x="681" y="287" width="1" height="1"/>
<rect x="681" y="298" width="1" height="1"/>
<rect x="681" y="309" width="1" height="1"/>
<rect x="681" y="384" width="1" height="1"/>
<rect x="683" y="208" width="1" height="1"/>
<rect x="686" y="313" width="1" height="1"/>
<rect x="688" y="278" width="1" height="1"/>
<rect x="691" y="334" width="1" height="1"/>
<rect x="692" y="163" width="1" height="1"/>
<rect x="692" y="279" width="1" height="1"/>
<rect x="694" y="360" width="1" height="1"/>
<rect x="696" y="285" width="1" height="1"/>
<rect x="696" y="310" width="1" height="1"/>
<rect x="699" y="230" width="1" height="1"/>
<rect x="701" y="333" width="1" height="1"/>
<rect x="702" y="259" width="1" height="1"/>
<rect x="704" y="301" width="1" height="1"/>
<rect x="707" y="353" width="1" height="1"/>
<rect x="709" y="344" width="1" height="1"/>
<rect x="715" y="246" width="1" height="1"/>
<rect x="728" y="230" width="1" height="1"/>
<rect x="730" y="220" width="1" height="1"/>
</g>
<circle cx="479.6" cy="254.5" r="2.6" fill="#fff"/>
<circle cx="581.8" cy="299.0" r="2.6" fill="#fff"/>
<circle cx="451.8" cy="215.5" r="2" fill="#fff"/>
<circle cx="419.4" cy="295.8" r="2.1" fill="#fff"/>
<circle cx="622.7" cy="356.9" r="2" fill="#fff"/>
<circle cx="518.0" cy="402.9" r="2.1" fill="#fff"/>
<circle cx="709.6" cy="241.3" r="2" fill="#fff"/>
<circle cx="421.8" cy="400.4" r="4" fill="#fff"/>
<circle cx="694.9" cy="268.8" r="3.4" fill="#ffd2d2"/>
<path d="M629.5,177.7 L632.5,178.7 L634.5,180.7 L634.5,182.7 L632.5,182.7 L630.5,180.2Z" fill="#fff"/>
<g font-family="Liberation Sans, sans-serif" font-size="12" letter-spacing="0.18" style="opacity:0.999">
<text x="539.3" y="171.6" fill="#b4b4b4">Polaris</text>
<text x="455.8" y="219.1" fill="#b4b4b4">Deneb</text>
<text x="580.3" y="231" fill="#b4b4b4">Mizar</text>
<text x="639.2" y="190.6" fill="#9cc4ff">Comet NEAT</text>
<text x="713.8" y="245.4" fill="#b4b4b4">Regulus</text>
<text x="484.3" y="258.7" fill="#b4b4b4">Vega</text>
<text x="453.9" y="267.3" fill="#b4b4b4">Albireo</text>
<text x="422.8" y="299.8" fill="#b4b4b4">Altair</text>
<text x="586.2" y="302.6" fill="#b4b4b4">Arcturus</text>
<text x="698.8" y="277.5" fill="#ffd2d2">Jupiter</text>
<text x="627.2" y="360.5" fill="#b4b4b4">Spica</text>
<text x="428.2" y="409.6" fill="#fff">Moon</text>
<text x="522.4" y="406.2" fill="#b4b4b4">Antares</text>
</g></svg>
<!--/SKYSVG-->
</div>
<div class="dir" style="left:510px;top:44px;width:48px;height:13px;line-height:13px"><span style="display:inline-block;transform:rotate(180deg);position:relative;top:-1px">NORTH</span></div>
<div class="dir" style="left:509px;top:472px;width:49px;height:13px;line-height:13px">SOUTH</div>
<div class="dir" style="left:315px;top:245px;width:12px;height:38px"><span style="position:absolute;left:4.5px;top:19px;transform:translate(-50%,-50%) rotate(90deg);line-height:12px">EAST</span></div>
<div class="dir" style="left:742px;top:244px;width:13px;height:41px"><span style="position:absolute;left:7.5px;top:20px;transform:translate(-50%,-50%) rotate(-90deg);line-height:12px;letter-spacing:0.3px">WEST</span></div>

<!-- help -->
<div class="abs" style="left:708px;top:7px;width:51px;height:24px;border-radius:12px;background:#484848"></div>
<div class="abs" style="left:710px;top:9px;width:47px;height:20px;border-radius:10px;background:linear-gradient(#f2a63a,#eb9a34 55%,#cf6e34)"></div>
<div class="t" style="left:718.8px;top:13px;font-size:12px;font-weight:bold;color:#47330f;-webkit-text-stroke:0.3px #47330f;letter-spacing:-0.3px;transform:scaleX(0.94);transform-origin:left top">HELP</div>

<!-- right border -->
<div class="abs" style="left:759px;top:32px;width:1px;height:516px;background:#626262"></div>
<div class="abs" style="left:760px;top:32px;width:5px;height:516px;background:linear-gradient(90deg,#8c8c8c 0,#888 40%,#5a5a5a 80%,#2a2a2a 100%)"></div>
<div class="abs" style="left:765px;top:0;width:1px;height:548px;background:#000"></div>

<!-- bottom bar -->
<div class="abs" style="left:315px;top:524px;width:445px;height:16px;background:#697272;border-top:1px solid #555c5c"></div>
<div class="abs" style="left:311px;top:540px;width:454px;height:8px;background:linear-gradient(#333 0,#4a4a4a 30%,#5c5c5c 70%,#646464)"></div>
<div class="btn" style="left:314px;top:524px;width:79px;height:16px;background:#5a6982;line-height:12px">PRINTABLE</div>
<div class="btn" style="left:683px;top:525px;width:76px;height:16px;background:#5a6982;line-height:12px;letter-spacing:0.8px">MAXIMIZE</div>
<div class="t" style="left:493.4px;top:526px;font-size:11px;font-weight:bold;color:#d0d4d4;-webkit-text-stroke:0.3px #d0d4d4;transform:scaleX(0.965);transform-origin:left top">ALL-SKY CHART</div>
</div>
</body></html>
